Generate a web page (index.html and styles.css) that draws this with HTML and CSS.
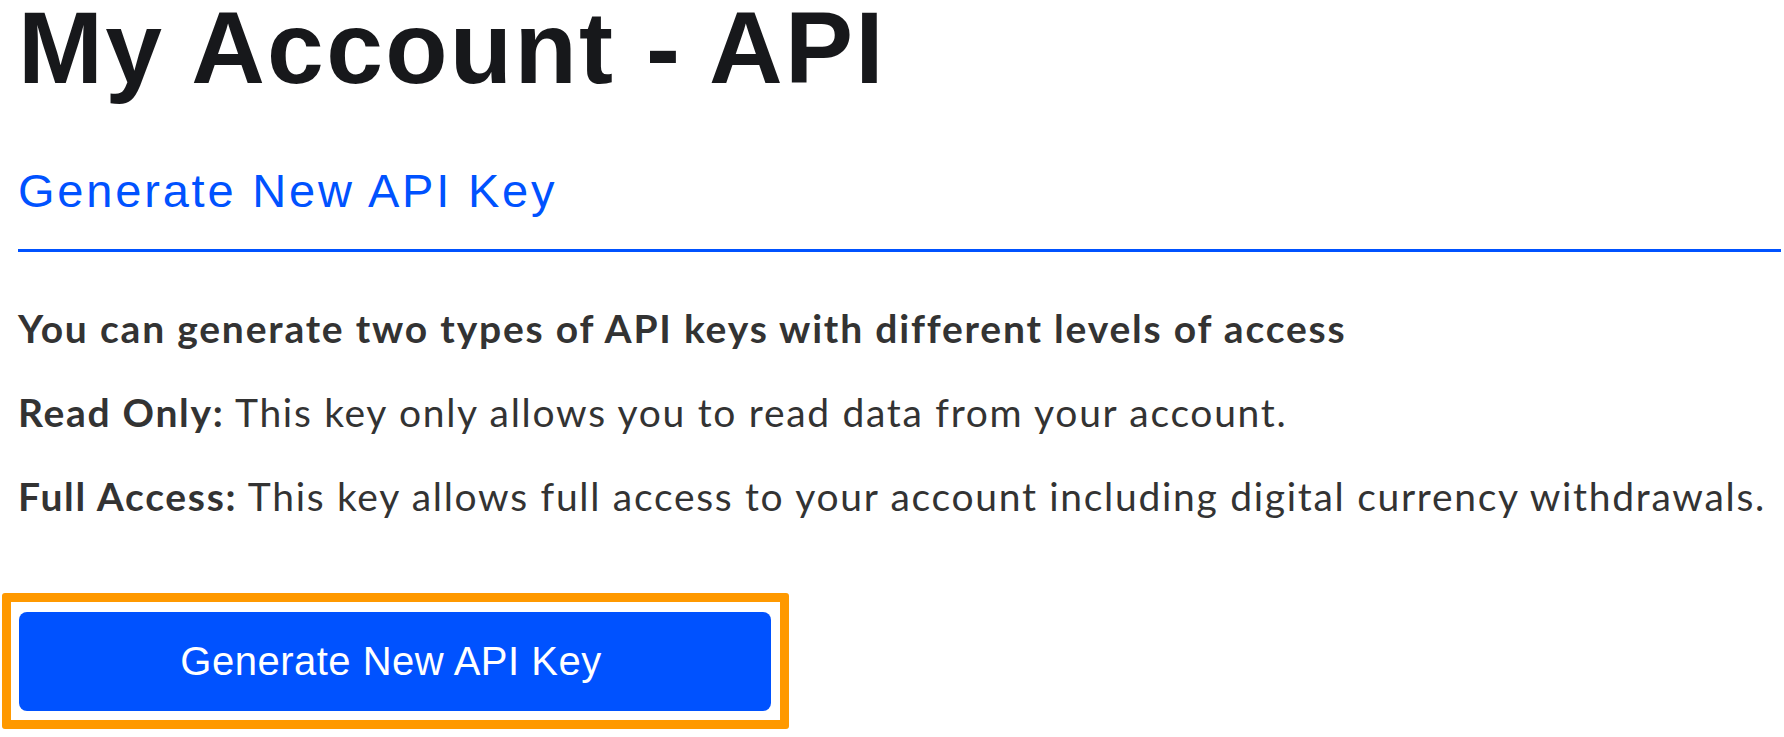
FILE: index.html
```html
<!DOCTYPE html>
<html lang="en">
<head>
<meta charset="utf-8">
<title>My Account - API</title>
<link rel="stylesheet" href="styles.css">
</head>
<body>
<main class="page">
  <h1 class="title">My Account - API</h1>
  <section class="panel">
    <h2 class="panel-heading">Generate New API Key</h2>
    <div class="panel-body">
      <p class="lead">You can generate two types of API keys with different levels of access</p>
      <p class="desc"><strong>Read Only:</strong> This key only allows you to read data from your account.</p>
      <p class="desc"><strong>Full Access:</strong> This key allows full access to your account including digital currency withdrawals.</p>
      <div class="highlight">
        <button class="btn-primary" type="button">Generate New API Key</button>
      </div>
    </div>
  </section>
</main>
</body>
</html>
```

FILE: styles.css
```css
html, body {
  margin: 0;
  padding: 0;
  background: #ffffff;
}

.page {
  padding: 0 3px 0 18px;
  display: flex;
  flex-direction: column;
}

.title {
  margin: 0;
  font-family: "Liberation Sans", Arial, sans-serif;
  font-weight: 700;
  font-size: 102px;
  line-height: 96px;
  letter-spacing: 2.3px;
  color: #17181b;
}

.panel {
  display: flex;
  flex-direction: column;
  margin-top: 67px;
}

.panel-heading {
  margin: 0;
  font-family: "Liberation Sans", Arial, sans-serif;
  font-weight: 400;
  font-size: 47px;
  line-height: 56px;
  letter-spacing: 2.8px;
  color: #0052ff;
  padding-bottom: 30px;
  border-bottom: 3px solid #0052ff;
}

.panel-body {
  display: flex;
  flex-direction: column;
  align-items: flex-start;
  padding-top: 53px;
}

.lead, .desc {
  margin: 0 0 37px 0;
  font-family: Lato, "Open Sans", sans-serif;
  font-size: 39px;
  line-height: 1.2;
  letter-spacing: 1.8px;
  color: #333333;
}

.lead {
  font-weight: 700;
}

.desc {
  letter-spacing: 1.7px;
}

.desc strong {
  font-weight: 700;
}

.highlight {
  margin-top: 37px;
  margin-left: -16px;
  border: 9px solid #ff9900;
  border-radius: 3px;
  padding: 10px 9px 9px 8px;
}

.btn-primary {
  display: block;
  width: 752px;
  height: 99px;
  border: none;
  border-radius: 8px;
  background: #0052ff;
  color: #ffffff;
  font-family: "Liberation Sans", Arial, sans-serif;
  font-size: 40px;
  letter-spacing: 0.5px;
  padding: 0 8px 0 0;
  cursor: pointer;
}
```
